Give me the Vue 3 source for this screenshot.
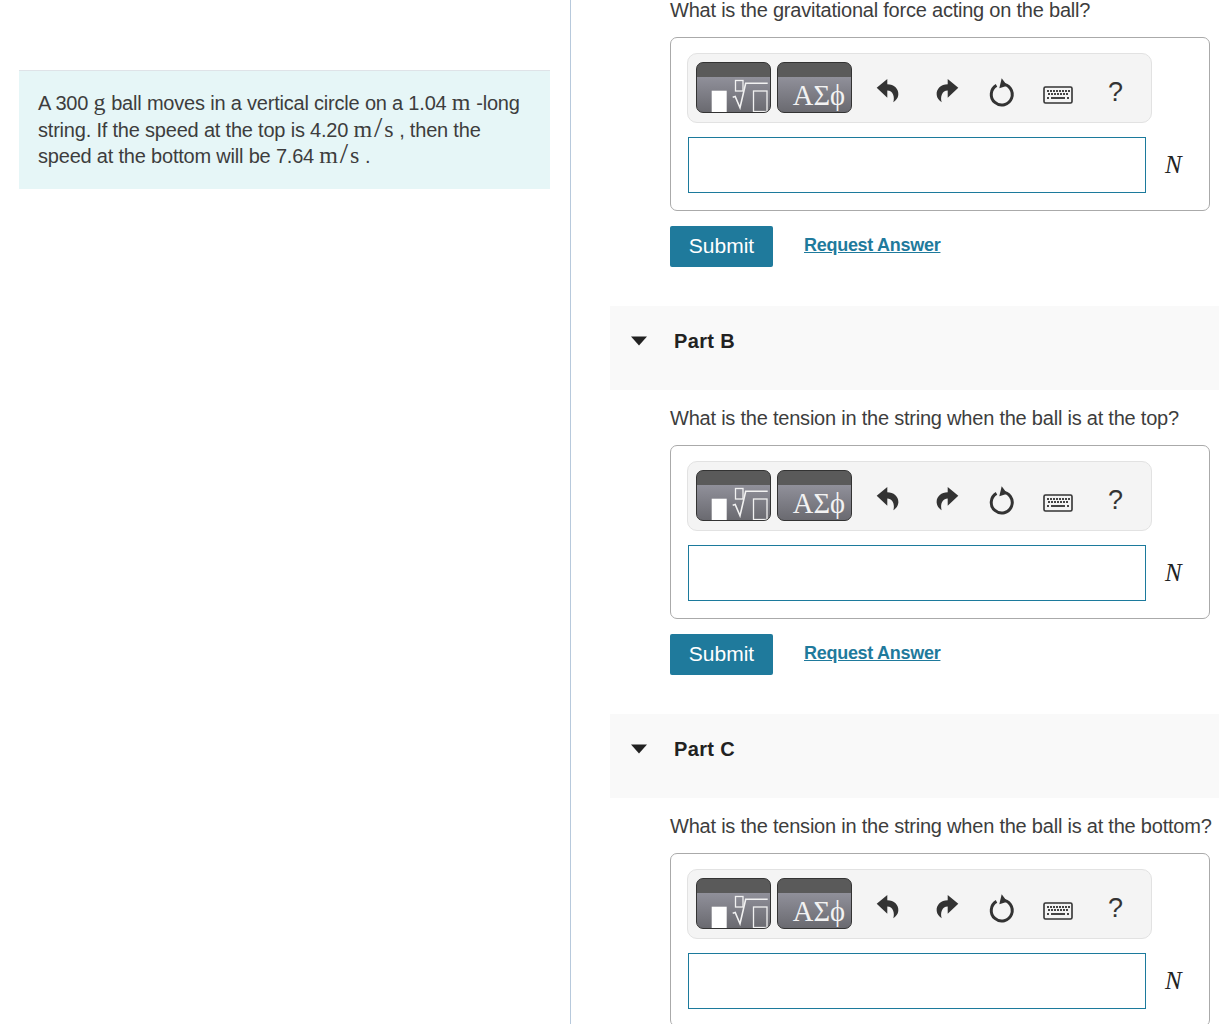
<script setup>
const parts = [
  { id: 'A', title: '', question: 'What is the gravitational force acting on the ball?' },
  { id: 'B', title: 'Part B', question: 'What is the tension in the string when the ball is at the top?' },
  { id: 'C', title: 'Part C', question: 'What is the tension in the string when the ball is at the bottom?' }
]
const keyRows = [
  [4, 7, 10, 13, 16, 19, 22, 25],
  [5, 8, 11, 14, 17, 20, 23],
]
</script>

<template>
  <div class="page">
    <aside class="left">
      <div class="problem">
        <p>A 300 <span class="m">g</span> ball moves in a vertical circle on a 1.04 <span class="m">m</span> -long string. If the speed at the top is 4.20 <span class="m">m<span class="sl">/</span>s</span> , then the speed at the bottom will be 7.64 <span class="m">m<span class="sl">/</span>s</span> .</p>
      </div>
    </aside>
    <main class="right">
      <section v-for="part in parts" :key="part.id" class="part">
        <header v-if="part.title" class="part-head">
          <svg class="caret" width="18" height="10" viewBox="0 0 18 10"><path d="M1 .5h16L9 9.500z" fill="#222" /></svg>
          <h2>{{ part.title }}</h2>
        </header>
        <div class="part-body">
          <p class="question">{{ part.question }}</p>
          <div class="panel">
            <div class="toolbar">
              <div class="tbtn">
                <svg width="73" height="49" viewBox="0 0 73 49" class="mathsvg">
                  <rect x="14.700" y="27.700" width="15" height="21.300" fill="#fff" />
                  <g fill="none" stroke="#f1f1f1" stroke-width="1.300">
                    <rect x="38.500" y="17.500" width="7.500" height="10.500" />
                    <path d="M35.700 34.300l2.500-.8 4.800 11.200 5.700-24.400h22" stroke-width="1.600" />
                    <rect x="56.500" y="28" width="13.500" height="20.500" />
                  </g>
                </svg>
              </div>
              <div class="tbtn greek">ΑΣϕ</div>
              <svg class="ic undo" width="24" height="26" viewBox="0 0 24 26"><path d="M.7 9.700 11.300 1v5.300C18 6.300 23 11 22.300 17c-.3 3-2.300 5.500-5 7.300 1.700-5.300-.3-11.800-6-11.800v7.200z" fill="#333" /></svg>
              <svg class="ic redo" width="24" height="26" viewBox="0 0 24 26"><path d="M23.300 9.700 12.700 1v5.300C6 6.300 1 11 1.700 17c.3 3 2.300 5.500 5 7.300-1.700-5.300.3-11.800 6-11.800v7.200z" fill="#333" /></svg>
              <svg class="ic reset" width="28" height="30" viewBox="0 0 28 30">
                <path d="M8.500 7.400A10.500 10.500 0 1 0 14 6" fill="none" stroke="#333" stroke-width="3" />
                <path d="M13.700.3 19.300 7.700 11.300 10.300z" fill="#333" />
              </svg>
              <svg class="ic kbd" width="30" height="18" viewBox="0 0 30 18">
                <rect x="1" y="1" width="28" height="16" rx="1.500" fill="#f4f4f4" stroke="#333" stroke-width="1.600" />
                <g v-for="(row, i) in keyRows" :key="i">
                  <rect v-for="x in row" :key="x" :x="x" :y="4 + i * 3" width="2" height="2" fill="#444" />
                </g>
                <rect x="4" y="11" width="2" height="2" fill="#444" />
                <rect x="8" y="11" width="14" height="2" fill="#444" />
                <rect x="24" y="11" width="2" height="2" fill="#444" />
              </svg>
              <span class="help">?</span>
            </div>
            <div class="answer">
              <div class="input"></div>
              <i class="unit">N</i>
            </div>
          </div>
          <div v-if="part.id !== 'C'" class="actions">
            <button class="submit">Submit</button>
            <a class="req">Request Answer</a>
          </div>
        </div>
      </section>
    </main>
  </div>
</template>

<style scoped>
.page {
  display: flex;
  height: 1024px;
  overflow: hidden;
  font-family: "Liberation Sans", Arial, sans-serif;
  color: #3d3d3d;
  background: #fff;
}
.left {
  box-sizing: border-box;
  width: 571px;
  flex: none;
  border-right: 1px solid #b7c9dc;
  padding: 70px 20px 0 19px;
}
.problem {
  background: #e6f6f7;
  border-top: 1px solid #dfe3e8;
  box-sizing: border-box;
  height: 119px;
  padding: 19px 19px 0;
}
.problem p {
  margin: 0;
  font-size: 20px;
  line-height: 26.500px;
  letter-spacing: -0.2px;
}
.m {
  font-family: "Liberation Serif", serif;
  font-size: 24px;
  line-height: 0;
  letter-spacing: 0.3px;
}
.sl { font-size: 30px; line-height: 0; margin: 0 1.500px; }
.right {
  flex: 1;
  min-width: 0;
  padding-left: 39px;
  margin-top: -3px;
}
.part-head {
  display: flex;
  align-items: flex-start;
  height: 84px;
  background: #f9f9f9;
  padding-left: 20px;
  box-sizing: border-box;
}
.caret { margin-top: 30px; }
.part-head h2 {
  margin: 22px 0 0 26px;
  font-size: 20px;
  line-height: 26px;
  font-weight: 700;
  letter-spacing: 0.35px;
  color: #222;
}
.part-body { padding: 0 9px 39px 60px; }
.question {
  margin: 0;
  height: 40px;
  font-size: 20px;
  line-height: 26px;
  white-space: nowrap;
  letter-spacing: -0.22px;
}
.part-head + .part-body .question { padding-top: 15px; height: 40px; }
.panel {
  box-sizing: border-box;
  height: 174px;
  border: 1px solid #aaa;
  border-radius: 7px;
  padding: 15px 0 0 16px;
}
.toolbar {
  box-sizing: border-box;
  display: flex;
  align-items: flex-start;
  width: 465px;
  height: 70px;
  background: #f4f4f4;
  border: 1px solid #e2e2e2;
  border-radius: 10px;
  padding: 8px 0 0 8px;
}
.tbtn {
  box-sizing: border-box;
  width: 75px;
  height: 51px;
  border: 1px solid #333;
  border-radius: 7px;
  overflow: hidden;
  background: linear-gradient(#5a5a5a 0 14px, #90909a 14px, #6a6a70 100%);
  flex: none;
}
.tbtn + .tbtn { margin-left: 6px; }
.mathsvg { display: block; }
.greek {
  font-family: "Liberation Serif", serif;
  font-size: 28.500px;
  line-height: 66px;
  color: #f2f2f2;
  text-align: right;
  padding-right: 6px;
  white-space: nowrap;
}
.ic { flex: none; }
.undo { margin: 16px 0 0 24px; }
.redo { margin: 16px 0 0 35px; }
.reset { margin: 16px 0 0 29px; }
.kbd { margin: 24px 0 0 27px; }
.help {
  margin: 13px 0 0 35px;
  font-size: 27px;
  line-height: 34px;
  color: #333;
}
.answer {
  display: flex;
  align-items: center;
  margin-top: 14px;
  margin-left: 1px;
}
.input {
  box-sizing: border-box;
  width: 458px;
  height: 56px;
  border: 1px solid #1c7a9c;
  background: #fff;
}
.unit {
  margin-left: 19px;
  font-family: "Liberation Serif", serif;
  font-size: 25px;
  color: #222;
}
.actions {
  display: flex;
  align-items: flex-start;
  margin-top: 15px;
}
.submit {
  width: 103px;
  height: 41px;
  background: #1f7a9c;
  border: 0;
  border-radius: 2px;
  color: #fff;
  font: 400 21px "Liberation Sans", Arial, sans-serif;
  padding: 0 0 2px;
}
.req {
  margin: 6px 0 0 31px;
  font-size: 18px;
  line-height: 26px;
  font-weight: 700;
  letter-spacing: -0.28px;
  color: #1f7a9c;
  text-decoration: underline;
}
</style>

<style>
html, body { margin: 0; overflow: hidden; }
</style>
